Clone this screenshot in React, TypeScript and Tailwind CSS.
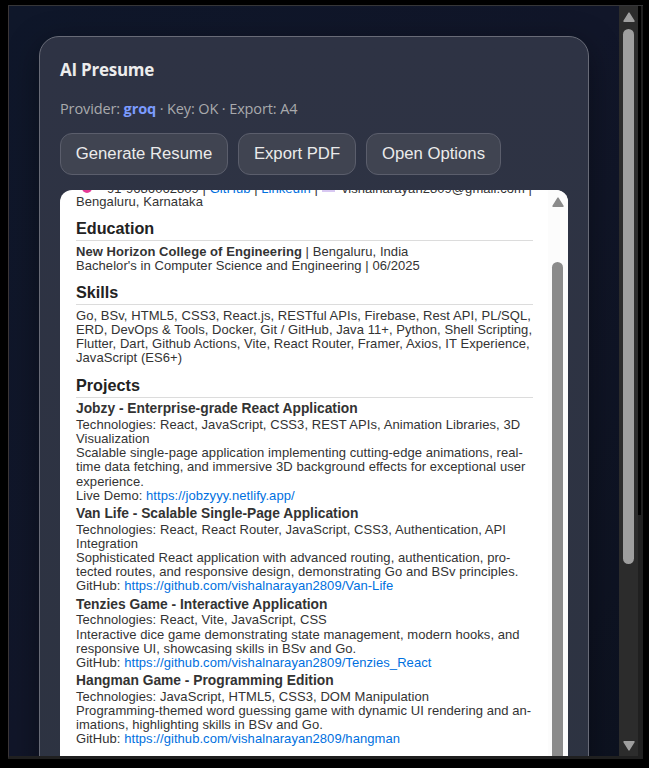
import React from "react";

const Line = ({ children }: { children: React.ReactNode }) => (
  <div className="whitespace-nowrap">{children}</div>
);

const Link = ({ children }: { children: React.ReactNode }) => (
  <span className="text-[#0070e0]">{children}</span>
);

const Heading = ({ children, className }: { children: React.ReactNode; className: string }) => (
  <h2 className={`h-[22px] border-b border-[#dcdcdc] text-[16.2px] leading-[18px] font-bold tracking-normal text-[#222] ${className}`}>
    {children}
  </h2>
);

type Project = { name: string; lines: string[]; label: string; url: string };

const projects: Project[] = [
  {
    name: "Jobzy - Enterprise-grade React Application",
    lines: [
      "Technologies: React, JavaScript, CSS3, REST APIs, Animation Libraries, 3D",
      "Visualization",
      "Scalable single-page application implementing cutting-edge animations, real-",
      "time data fetching, and immersive 3D background effects for exceptional user",
      "experience.",
    ],
    label: "Live Demo: ",
    url: "https://jobzyyy.netlify.app/",
  },
  {
    name: "Van Life - Scalable Single-Page Application",
    lines: [
      "Technologies: React, React Router, JavaScript, CSS3, Authentication, API",
      "Integration",
      "Sophisticated React application with advanced routing, authentication, pro-",
      "tected routes, and responsive design, demonstrating Go and BSv principles.",
    ],
    label: "GitHub: ",
    url: "https://github.com/vishalnarayan2809/Van-Life",
  },
  {
    name: "Tenzies Game - Interactive Application",
    lines: [
      "Technologies: React, Vite, JavaScript, CSS",
      "Interactive dice game demonstrating state management, modern hooks, and",
      "responsive UI, showcasing skills in BSv and Go.",
    ],
    label: "GitHub: ",
    url: "https://github.com/vishalnarayan2809/Tenzies_React",
  },
  {
    name: "Hangman Game - Programming Edition",
    lines: [
      "Technologies: JavaScript, HTML5, CSS3, DOM Manipulation",
      "Programming-themed word guessing game with dynamic UI rendering and an-",
      "imations, highlighting skills in BSv and Go.",
    ],
    label: "GitHub: ",
    url: "https://github.com/vishalnarayan2809/hangman",
  },
];

const Button = ({ children, className }: { children: string; className: string }) => (
  <button
    className={`h-[42px] shrink-0 rounded-[12px] border border-[#5b5e6c] bg-[#404451] text-center text-[16.7px] whitespace-nowrap text-[#ebebeb] ${className}`}
  >
    {children}
  </button>
);

const Arrow = ({ className, down }: { className: string; down?: boolean }) => (
  <svg width="12" height="10" viewBox="0 0 12 10" className={className}>
    <path
      d={down ? "M1 .8h10L6 8.9Z" : "M1 9.2h10L6 1.1Z"}
      fill="currentColor"
      stroke="currentColor"
      strokeWidth="1.4"
      strokeLinejoin="round"
    />
  </svg>
);

export default function App() {
  return (
    <div className="h-[768px] w-[649px] overflow-hidden bg-black pt-[5px] pl-[8px] font-['Liberation_Sans',Arial,sans-serif]">
      <div className="flex h-[754px] w-[635px] border-t border-b-[3px] border-l border-t-[#363638] border-b-[#202020] border-l-[#3b3638]">
        <main className="h-[750px] w-[610px] shrink-0 overflow-hidden bg-linear-to-br from-[#0f172a] via-[#111629] to-[#0d1220] pt-[30px] pl-[30px]">
          <section className="h-[900px] w-[550px] rounded-[20px] border border-[#686b77] bg-linear-to-b from-[#2e3344] to-[#2d3341] px-[20px] pt-[21px] shadow-[0_8px_32px_rgba(0,0,0,0.37)]">
            <h1 className="h-[24px] font-['Open_Sans','Noto_Sans',sans-serif] text-[17px] leading-[24px] font-bold tracking-[-0.25px] whitespace-nowrap text-[#ececec]">
              AI Presume
            </h1>
            <p className="mt-[17px] h-[20px] font-['Open_Sans','Noto_Sans',sans-serif] text-[14.5px] leading-[20px] tracking-[-0.12px] whitespace-nowrap text-[#a9aaad]">
              Provider: <b className="text-[#7c9cff]">groq</b> · Key: OK · Export: A4
            </p>
            <div className="mt-[14px] flex gap-[10px]">
              <Button className="w-[168px]">Generate Resume</Button>
              <Button className="w-[118px]">Export PDF</Button>
              <Button className="w-[135px]">Open Options</Button>
            </div>
            <div className="mt-[15px] flex h-[700px] w-[508px] overflow-hidden rounded-t-[12px] bg-white">
              <article className="w-[473px] shrink-0 pl-[16px] text-[13px] leading-[14.2px] tracking-[0.06px] text-[#333]">
                <div className="-mt-[8px] h-[13px] whitespace-nowrap">
                  <span className="mr-[15px] ml-[6px] inline-block h-[11px] w-[10px] rounded-b-[5px] bg-[#e53a96] align-top" />
                  91-9686062809 | <Link>GitHub</Link> | <Link>LinkedIn</Link> |{" "}
                  <span className="mr-[7px] inline-block h-[10px] w-[13px] bg-[#d8c8f2] align-top" />
                  vishalnarayan2809@gmail.com |
                </div>
                <Line>Bengaluru, Karnataka</Line>
                <Heading className="mt-[10px]">Education</Heading>
                <div className="mt-[4px]">
                  <Line><b>New Horizon College of Engineering</b> | Bengaluru, India</Line>
                  <Line>Bachelor's in Computer Science and Engineering | 06/2025</Line>
                </div>
                <Heading className="mt-[9.2px]">Skills</Heading>
                <div className="mt-[4px]">
                  <Line>Go, BSv, HTML5, CSS3, React.js, RESTful APIs, Firebase, Rest API, PL/SQL,</Line>
                  <Line>ERD, DevOps &amp; Tools, Docker, Git / GitHub, Java 11+, Python, Shell Scripting,</Line>
                  <Line>Flutter, Dart, Github Actions, Vite, React Router, Framer, Axios, IT Experience,</Line>
                  <Line>JavaScript (ES6+)</Line>
                </div>
                <Heading className="mt-[10.4px]">Projects</Heading>
                {projects.map((p) => (
                  <div key={p.name} className="mt-[2px]">
                    <h3 className="h-[17.7px] text-[13.8px] leading-[17.6px] font-bold tracking-normal whitespace-nowrap">{p.name}</h3>
                    {p.lines.map((l) => (
                      <Line key={l}>{l}</Line>
                    ))}
                    <Line>
                      {p.label}
                      <Link>{p.url}</Link>
                    </Line>
                  </div>
                ))}
              </article>
              <div className="ml-auto flex w-[20px] flex-col items-center bg-[#fcfcfc] pt-[7px] pr-[1px]">
                <Arrow className="text-[#8b8b8b]" />
                <div className="mt-[55px] h-[600px] w-[11px] rounded-full bg-[#8b8b8b]" />
              </div>
            </div>
          </section>
        </main>
        <div className="flex w-[19px] shrink-0 flex-col items-center bg-[#2c2c2c] pt-[6px]">
          <Arrow className="text-[#9f9f9f]" />
          <div className="mt-[7px] h-[535px] w-[11px] rounded-full bg-[#9f9f9f]" />
          <Arrow down className="mt-[177px] text-[#9f9f9f]" />
        </div>
        <div className="w-[5px] bg-[#202020]">
          <div className="h-[509px] w-[3px] bg-black" />
        </div>
      </div>
    </div>
  );
}
